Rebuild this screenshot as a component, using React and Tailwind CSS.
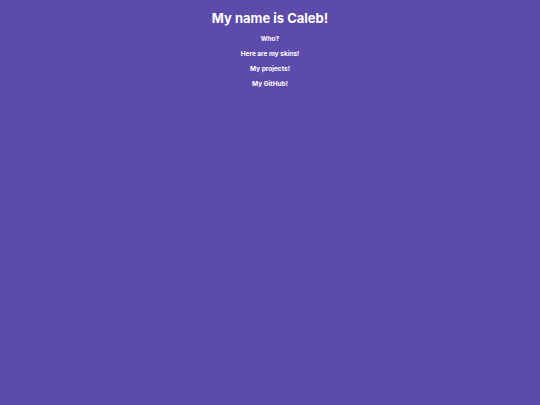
export default function App() {
  const links = ['Who?', 'Here are my skins!', 'My projects!', 'My GitHub!'];
  return (
    <div className="min-h-[405px] w-full bg-[#5d4bab] text-white font-['Inter',_sans-serif] flex flex-col items-center">
      <h1 className="mt-[9px] text-[13px] font-bold leading-[18px]">My name is Caleb!</h1>
      <div className="mt-[8px] flex flex-col items-center gap-[6px]">
        {links.map((l) => (
          <a key={l} className="text-[6.5px] font-bold leading-[9px]">{l}</a>
        ))}
      </div>
    </div>
  );
}
